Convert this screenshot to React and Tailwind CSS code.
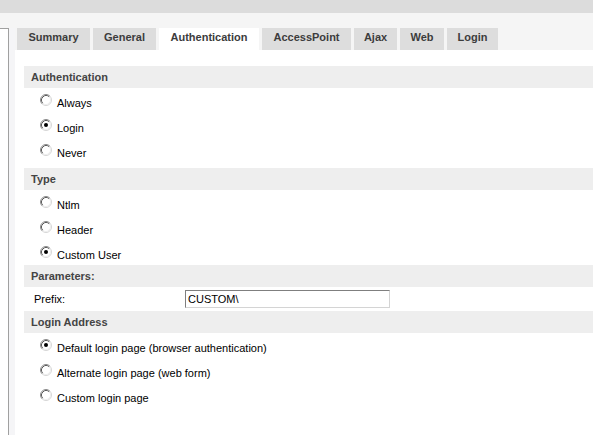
import React from "react";

const FONT = { fontFamily: '"Liberation Sans", Arial, sans-serif' };

function Radio({ checked }) {
  return (
    <svg width="12" height="12" viewBox="0 0 12 12" className="shrink-0">
      <circle cx="6" cy="6" r="5" fill="#ffffff" />
      <path d="M2.11 9.89 A5.5 5.5 0 0 1 9.89 2.11" fill="none" stroke="#8c8c8c" strokeWidth="1" />
      <path d="M9.89 2.11 A5.5 5.5 0 0 1 2.11 9.89" fill="none" stroke="#d6d6d6" strokeWidth="1" />
      <path d="M2.82 9.18 A4.5 4.5 0 0 1 9.18 2.82" fill="none" stroke="#5a5a5a" strokeWidth="1" />
      <path d="M9.18 2.82 A4.5 4.5 0 0 1 2.82 9.18" fill="none" stroke="#eeeeee" strokeWidth="1" />
      {checked && <circle cx="6" cy="6" r="2" fill="#000000" />}
    </svg>
  );
}

function Header({ children }) {
  return (
    <div className="h-[22px] bg-[#eeeeee] flex items-center pl-[7px] text-[11px] leading-[13px] font-bold text-[#444444]">
      {children}
    </div>
  );
}

function RadioRow({ label, checked }) {
  return (
    <div className="h-[25px] flex items-start pl-[16px]">
      <div className="mt-[6px]">
        <Radio checked={checked} />
      </div>
      <div className="ml-[5px] mt-[9px] text-[11px] leading-[13px] text-black">{label}</div>
    </div>
  );
}

const tabs = [
  { name: "Summary", w: "w-[73px]" },
  { name: "General", w: "w-[63px]" },
  { name: "Authentication", w: "w-[100px]", active: true },
  { name: "AccessPoint", w: "w-[89px]" },
  { name: "Ajax", w: "w-[43px]" },
  { name: "Web", w: "w-[44px]" },
  { name: "Login", w: "w-[51px]" },
];

export default function App() {
  return (
    <div className="w-[610px] h-[435px] bg-white overflow-hidden" style={FONT}>
      <div className="w-[593px] h-full flex flex-col">
        <div className="h-[13px] bg-[#dcdcdc]" />
        <div className="flex flex-1">
          {/* left edge */}
          <div className="w-[15px] flex flex-col">
            <div className="h-[15px] bg-[#f5f5f5]" />
            <div className="flex flex-1">
              <div className="w-[9px] bg-white border-t border-r border-[#a0a0a0]" />
              <div className="flex-1 bg-[#f5f5f7]" />
            </div>
          </div>
          {/* main */}
          <div className="flex-1 flex flex-col">
            <div className="bg-[#f5f5f5] pt-[15px] pl-[2px] flex gap-[3px]">
              {tabs.map((t) => (
                <div
                  key={t.name}
                  className={`${t.w} h-[22px] pt-[3px] flex justify-center text-[11px] leading-[13px] font-bold text-[#3c3c3c] ${
                    t.active ? "bg-white" : "bg-[#dddddd]"
                  }`}
                >
                  {t.name}
                </div>
              ))}
            </div>
            <div className="flex-1 bg-white pl-[9px] pt-[16px]">
              <Header>Authentication</Header>
              <div className="pb-[5px]">
                <RadioRow label="Always" />
                <RadioRow label="Login" checked />
                <RadioRow label="Never" />
              </div>
              <Header>Type</Header>
              <RadioRow label="Ntlm" />
              <RadioRow label="Header" />
              <RadioRow label="Custom User" checked />
              <Header>Parameters:</Header>
              <div className="h-[24px] flex items-center">
                <div className="w-[161px] pl-[10px] text-[11px] leading-[13px] text-black">Prefix:</div>
                <div className="w-[205px] h-[18px] border-t border-l border-[#7f7f7f] border-b-[#d4d4d4] border-r-[#d4d4d4] border-b border-r bg-white flex items-center pl-[2px] text-[11px] leading-[13px] text-black">
                  CUSTOM\
                </div>
              </div>
              <Header>Login Address</Header>
              <RadioRow label="Default login page (browser authentication)" checked />
              <RadioRow label="Alternate login page (web form)" />
              <RadioRow label="Custom login page" />
            </div>
          </div>
        </div>
      </div>
    </div>
  );
}
